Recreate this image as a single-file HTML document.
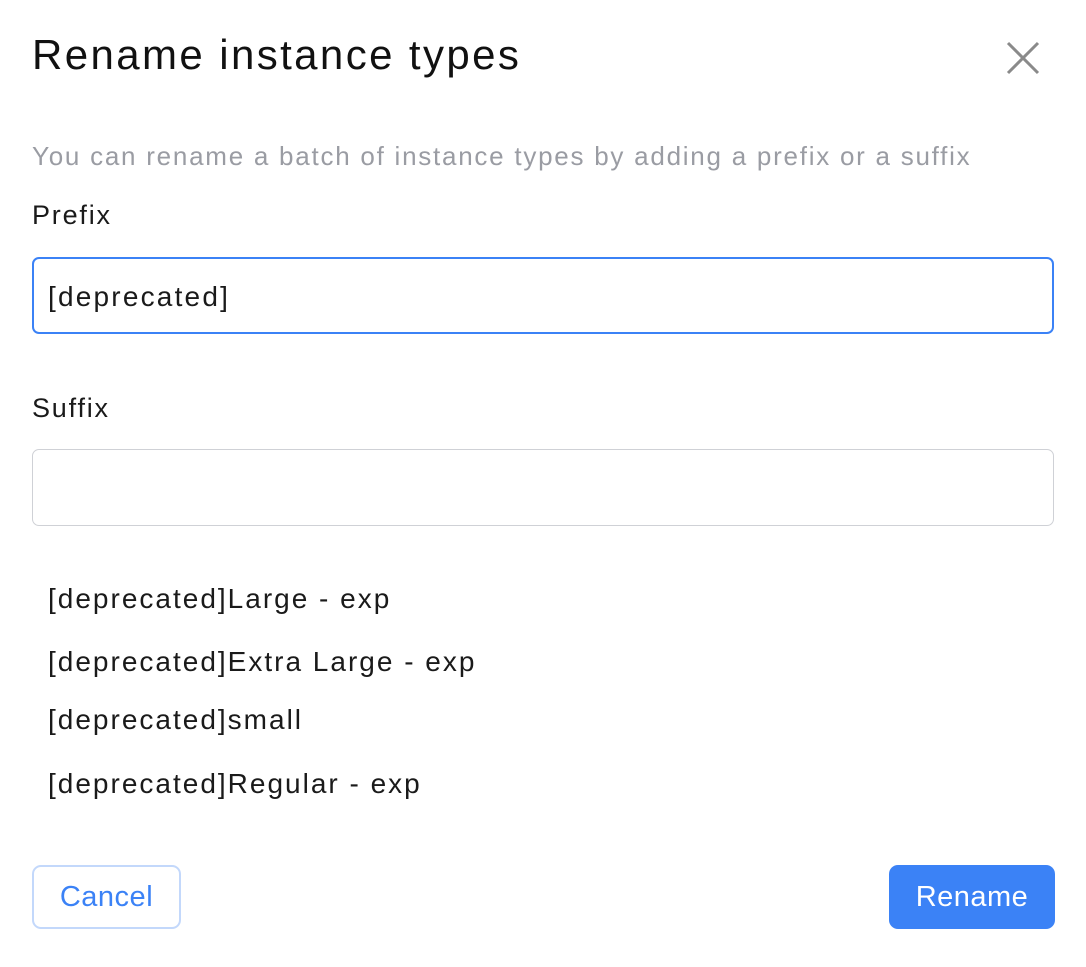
<!DOCTYPE html>
<html><head><style>
body{margin:0;width:1086px;height:967px;background:#fff;font-family:"Liberation Sans",sans-serif;position:relative;overflow:hidden;color:#1a1a1a}
.a{position:absolute;white-space:nowrap;line-height:1}
.inp{position:absolute;left:32px;width:1022px;height:77px;box-sizing:border-box;border-radius:7px}
.btn{position:absolute;top:865px;height:64px;box-sizing:border-box;border-radius:9px;font-size:29px;display:flex;align-items:center;justify-content:center;letter-spacing:0.5px}
.l{font-size:28px;letter-spacing:2px;left:48px}
</style></head><body>
<div class="a" style="left:32px;top:34px;font-size:42px;color:#111;letter-spacing:2.4px">Rename instance types</div>
<svg style="position:absolute;left:1005px;top:40px" width="36" height="36" viewBox="0 0 36 36"><path d="M3 3L33 33M33 3L3 33" stroke="#8a8a8a" stroke-width="3" fill="none"/></svg>
<div class="a" style="left:32px;top:143px;font-size:26px;color:#9a9ca3;letter-spacing:1.75px">You can rename a batch of instance types by adding a prefix or a suffix</div>
<div class="a" style="left:32px;top:202px;font-size:27px;letter-spacing:1.8px">Prefix</div>
<div class="inp" style="top:257px;border:2px solid #3b82f6"></div>
<div class="a l" style="top:283px;letter-spacing:2.2px">[deprecated]</div>
<div class="a" style="left:32px;top:395px;font-size:27px;letter-spacing:1.8px">Suffix</div>
<div class="inp" style="top:449px;border:1.5px solid #cfd1d6"></div>
<div class="a l" style="top:585px">[deprecated]Large - exp</div>
<div class="a l" style="top:648px">[deprecated]Extra Large - exp</div>
<div class="a l" style="top:706px">[deprecated]small</div>
<div class="a l" style="top:770px">[deprecated]Regular - exp</div>
<div class="btn" style="left:32px;width:149px;border:2px solid #c3d8fb;color:#3b82f6">Cancel</div>
<div class="btn" style="left:889px;width:166px;background:#3b82f6;color:#fff">Rename</div>
</body></html>
